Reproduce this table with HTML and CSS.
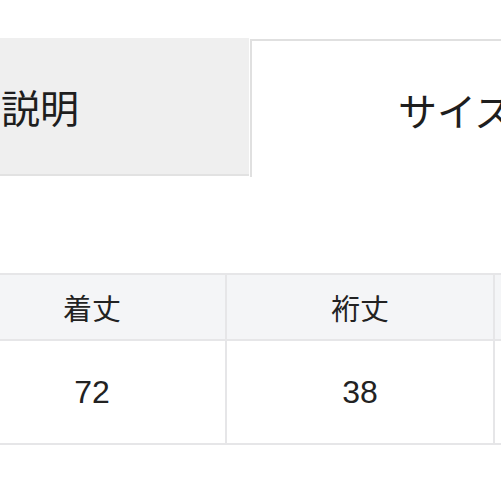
FILE: index.html
```html
<!DOCTYPE html>
<html lang="ja">
<head>
<meta charset="utf-8">
<link rel="stylesheet" href="styles.css">
</head>
<body>
<div class="page">
  <div class="tabs">
    <div class="tab tab-off">商品の説明</div>
    <div class="tab tab-on">サイズ表</div>
  </div>
  <table class="size">
    <thead>
      <tr><th>着丈</th><th>裄丈</th><th>身幅</th></tr>
    </thead>
    <tbody>
      <tr><td>72</td><td>38</td><td>60</td></tr>
    </tbody>
  </table>
</div>
</body>
</html>
```
FILE: styles.css
```css
html, body {
  margin: 0;
  padding: 0;
  background: #fff;
  overflow: hidden;
}
body {
  width: 501px;
  height: 501px;
  font-family: "Noto Sans CJK JP", "Liberation Sans", sans-serif;
  color: #222;
}
.page {
  width: 501px;
  overflow: hidden;
  padding-top: 38px;
}
.tabs {
  display: flex;
  margin-left: -286px;
  height: 138px;
}
.tab {
  flex: none;
  box-sizing: border-box;
  height: 138px;
  display: flex;
  align-items: center;
  font-size: 39px;
  line-height: 1;
  color: #1e1e1e;
}
.tab-off {
  width: 535px;
  justify-content: center;
  background: #efefef;
  border-bottom: 2px solid #e2e2e2;
  height: 138px;
}
.tab-on {
  width: 400px;
  margin-left: 1px;
  padding-left: 146px;
  background: #fff;
  border-top: 2px solid #e0e0e0;
  border-left: 2px solid #e0e0e0;
  margin-top: 1px;
  white-space: nowrap;
}
.size {
  margin-top: 97px;
  margin-left: -43px;
  border-collapse: collapse;
  table-layout: fixed;
  width: 804px;
}
.size th, .size td {
  border: 2px solid #e6e6e8;
  width: 266px;
  text-align: center;
  padding: 0;
  color: #222;
}
.size th {
  height: 64px;
  background: #f4f5f7;
  font-size: 29px;
  font-weight: 400;
}
.size td {
  height: 102px;
  font-family: "Liberation Sans", Arial, sans-serif;
  font-size: 32px;
}
```
